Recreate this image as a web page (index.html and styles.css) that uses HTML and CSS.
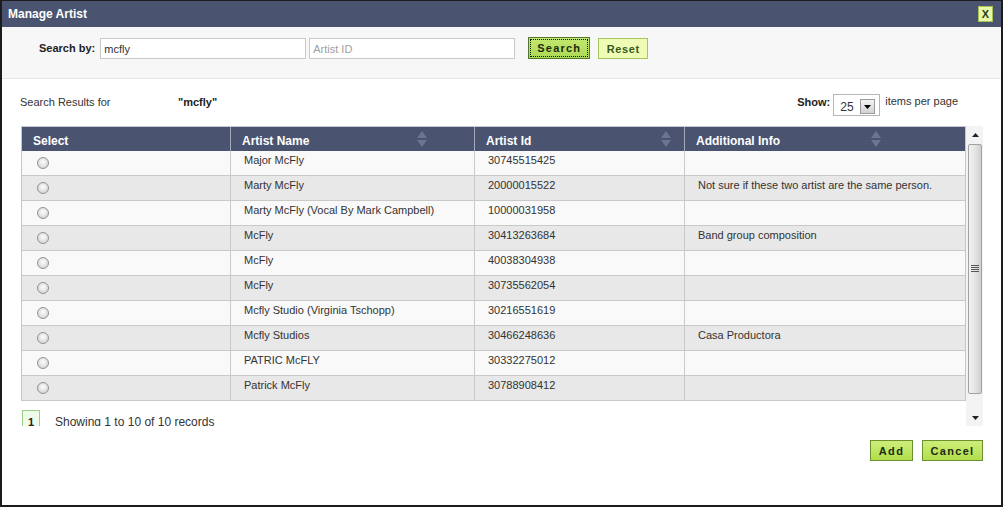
FILE: index.html
```html
<!DOCTYPE html>
<html>
<head>
<meta charset="utf-8">
<title>Manage Artist</title>
<link rel="stylesheet" href="styles.css">
</head>
<body>
<div class="window">
  <header class="titlebar">
    <h1 class="title">Manage Artist</h1>
    <button class="close" type="button">X</button>
  </header>
  <form class="searchbar">
    <label class="search-label">Search by:</label>
    <input class="field" type="text" value="mcfly">
    <input class="field field-id" type="text" placeholder="Artist ID">
    <button class="btn btn-search" type="button">Search</button>
    <button class="btn btn-reset" type="button">Reset</button>
  </form>
  <main class="content">
    <div class="results-head">
      <div class="results-for"><span class="rf-label">Search Results for</span><b>"mcfly"</b></div>
      <div class="show">
        <b class="show-label">Show:</b>
        <div class="select"><span class="select-val">25</span><span class="select-btn"><svg width="7" height="4" viewBox="0 0 7 4"><path d="M0 0H7L3.5 4Z" fill="#000"/></svg></span></div>
        <span class="show-tail">items per page</span>
      </div>
    </div>
    <div class="grid-wrap">
      <div class="viewport">
        <div class="grid">
          <div class="row head">
            <div class="th">Select</div>
            <div class="th">Artist Name<svg class="sort sort-name" width="10" height="18" viewBox="0 0 10 18"><path d="M5 1L10 8H0Z M0 10H10L5 17Z" fill="#6c7690"/></svg></div>
            <div class="th">Artist Id<svg class="sort sort-id" width="10" height="18" viewBox="0 0 10 18"><path d="M5 1L10 8H0Z M0 10H10L5 17Z" fill="#6c7690"/></svg></div>
            <div class="th">Additional Info<svg class="sort sort-info" width="10" height="18" viewBox="0 0 10 18"><path d="M5 1L10 8H0Z M0 10H10L5 17Z" fill="#6c7690"/></svg></div>
          </div>
          <div class="row"><div class="td sel"><input class="radio" type="radio" name="a"></div><div class="td">Major McFly</div><div class="td">30745515425</div><div class="td"></div></div>
          <div class="row alt"><div class="td sel"><input class="radio" type="radio" name="a"></div><div class="td">Marty McFly</div><div class="td">20000015522</div><div class="td">Not sure if these two artist are the same person.</div></div>
          <div class="row"><div class="td sel"><input class="radio" type="radio" name="a"></div><div class="td">Marty McFly (Vocal By Mark Campbell)</div><div class="td">10000031958</div><div class="td"></div></div>
          <div class="row alt"><div class="td sel"><input class="radio" type="radio" name="a"></div><div class="td">McFly</div><div class="td">30413263684</div><div class="td">Band group composition</div></div>
          <div class="row"><div class="td sel"><input class="radio" type="radio" name="a"></div><div class="td">McFly</div><div class="td">40038304938</div><div class="td"></div></div>
          <div class="row alt"><div class="td sel"><input class="radio" type="radio" name="a"></div><div class="td">McFly</div><div class="td">30735562054</div><div class="td"></div></div>
          <div class="row"><div class="td sel"><input class="radio" type="radio" name="a"></div><div class="td">Mcfly Studio (Virginia Tschopp)</div><div class="td">30216551619</div><div class="td"></div></div>
          <div class="row alt"><div class="td sel"><input class="radio" type="radio" name="a"></div><div class="td">Mcfly Studios</div><div class="td">30466248636</div><div class="td">Casa Productora</div></div>
          <div class="row"><div class="td sel"><input class="radio" type="radio" name="a"></div><div class="td">PATRIC McFLY</div><div class="td">30332275012</div><div class="td"></div></div>
          <div class="row alt"><div class="td sel"><input class="radio" type="radio" name="a"></div><div class="td">Patrick McFly</div><div class="td">30788908412</div><div class="td"></div></div>
        </div>
        <div class="pager"><span class="page">1</span><span class="count">Showing 1 to 10 of 10 records</span></div>
      </div>
      <div class="scrollbar">
        <div class="sb-btn"><svg width="7" height="4" viewBox="0 0 7 4"><path d="M3.5 0L7 4H0Z" fill="#222"/></svg></div>
        <div class="sb-track">
          <div class="sb-thumb"><svg width="8" height="8" viewBox="0 0 8 8"><path d="M0 0.5H8M0 2.5H8M0 4.5H8M0 6.5H8" stroke="#555" stroke-width="1"/></svg></div>
        </div>
        <div class="sb-btn"><svg width="7" height="4" viewBox="0 0 7 4"><path d="M0 0H7L3.5 4Z" fill="#222"/></svg></div>
      </div>
    </div>
    <div class="actions">
      <button class="btn btn-go btn-add" type="button">Add</button>
      <button class="btn btn-go btn-cancel" type="button">Cancel</button>
    </div>
  </main>
</div>
</body>
</html>
```
FILE: styles.css
```css
* { box-sizing: border-box; }
html, body { margin: 0; padding: 0; background: #fff; }
body { font-family: "Liberation Sans", Arial, sans-serif; font-size: 11px; color: #333; }

.window {
  width: 1003px;
  height: 507px;
  border: 2px solid #1c1c1c;
  border-top-width: 1px;
  background: #fff;
}

.titlebar {
  height: 26px;
  background: #4a5471;
  display: flex;
  align-items: center;
  justify-content: space-between;
  padding: 0 8px 0 6px;
}
.title {
  margin: 0;
  font-size: 12px;
  font-weight: bold;
  color: #fff;
}
.close {
  width: 15px;
  height: 16px;
  padding: 0;
  border: 1px solid #a5c25a;
  background: #e9f8a8;
  color: #24401c;
  font: bold 11px "Liberation Sans", Arial, sans-serif;
  line-height: 14px;
}

.searchbar {
  margin: 0;
  height: 52px;
  background: #f7f7f7;
  border-bottom: 1px solid #e6e6e6;
  display: flex;
  align-items: flex-start;
  padding: 11px 0 0 37px;
}
.search-label {
  font-weight: bold;
  color: #222;
  line-height: 21px;
  margin-right: 5px;
}
.field {
  width: 206px;
  height: 21px;
  border: 1px solid #c9c9c9;
  background: #fff;
  padding: 0 3px;
  font: 11px "Liberation Sans", Arial, sans-serif;
  color: #333;
  outline: none;
}
.field::placeholder { color: #a0a0a0; }
.field-id { margin-left: 3px; }

.btn {
  height: 21px;
  padding: 0;
  font: bold 11px "Liberation Sans", Arial, sans-serif;
  letter-spacing: 1.2px;
  color: #1d2a12;
  cursor: pointer;
}
.btn-search {
  margin-left: 13px;
  margin-top: -1px;
  width: 62px;
  height: 22px;
  background: linear-gradient(#c4e870, #acd852);
  border: 1px solid #50782a;
  outline: 1px dotted #111;
  outline-offset: -3px;
}
.btn-reset {
  margin-left: 8px;
  width: 50px;
  background: #effcb6;
  border: 1px solid #a5c65c;
  color: #3a5a1a;
  letter-spacing: 0.6px;
}

.content {
  padding: 0 18px 0 18px;
}

.results-head {
  display: flex;
  justify-content: space-between;
  align-items: flex-start;
  margin-top: 15px;
  height: 22px;
}
.results-for { line-height: 16px; color: #333; }
.rf-label { display: inline-block; width: 158px; }
.results-for b { color: #222; }

.show {
  display: flex;
  align-items: flex-start;
  margin-right: 25px;
}
.show-label { line-height: 16px; color: #222; margin-right: 3px; }
.select {
  width: 47px;
  height: 22px;
  border: 1px solid #b4b6bc;
  background: #fff;
  display: flex;
  align-items: center;
  justify-content: space-between;
  padding: 0 4px 0 6px;
}
.select-val { font-size: 12px; padding-top: 3px; color: #333; }
.select-btn {
  width: 15px;
  height: 15px;
  margin-top: 3px;
  border: 1px solid #9a9a9a;
  background: linear-gradient(#f4f4f4, #d2d2d2);
  display: flex;
  align-items: center;
  justify-content: center;
}
.show-tail { line-height: 14px; margin-left: 5px; color: #333; }

.grid-wrap {
  margin-top: 10px;
  margin-left: 1px;
  height: 300px;
  display: flex;
}
.viewport {
  flex: 0 0 945px;
  height: 300px;
  overflow: hidden;
}
.grid {
  width: 945px;
  border-left: 1px solid #c6c6c6;
  border-right: 1px solid #c6c6c6;
  border-top: 1px solid #c6c9d0;
}
.row {
  display: grid;
  grid-template-columns: 208px 244px 210px 281px;
  height: 25px;
  border-bottom: 1px solid #c9c9c9;
  background: #f9f9f9;
}
.row.alt { background: #e8e8e8; }
.row.head {
  height: 24px;
  background: #4a5471;
  border-bottom: none;
}
.th {
  display: flex;
  align-items: center;
  padding: 3px 0 0 11px;
  font-size: 12px;
  font-weight: bold;
  color: #fff;
}
.th + .th { border-left: 1px solid #a3a9b8; }
.sort { margin-left: auto; margin-top: -3px; flex: none; }
.sort-name { margin-right: 47px; }
.sort-id { margin-right: 13px; }
.sort-info { margin-right: 84px; }

.td {
  padding: 2px 0 0 13px;
  line-height: 14px;
  color: #333;
  white-space: nowrap;
  overflow: hidden;
}
.td + .td { border-left: 1px solid #c9c9c9; }
.td.sel {
  display: flex;
  align-items: center;
  padding: 0 0 0 15px;
}
.radio {
  appearance: none;
  -webkit-appearance: none;
  margin: -1px 0 0 0;
  width: 12px;
  height: 12px;
  border-radius: 50%;
  border: 1px solid #929292;
  background: radial-gradient(circle at 50% 40%, #fdfdfd 0, #e6e6e6 45%, #c9c9c9 100%);
}

.pager {
  margin-top: 9px;
  display: flex;
  align-items: center;
}
.page {
  width: 18px;
  height: 24px;
  margin-left: 1px;
  border: 1px solid #9bcf8c;
  background: #effbe9;
  font-weight: bold;
  color: #222;
  text-align: center;
  line-height: 22px;
}
.count { margin-left: 15px; font-size: 12px; color: #333; }

.scrollbar {
  flex: 0 0 17px;
  height: 300px;
  display: flex;
  flex-direction: column;
  background: #f3f3f3;
}
.sb-btn {
  height: 17px;
  display: flex;
  align-items: center;
  justify-content: center;
  padding-left: 2px;
}
.sb-track {
  flex: 1;
  padding: 1px 1px 0 2px;
}
.sb-thumb {
  height: 250px;
  border: 1px solid #a2a2a2;
  border-radius: 2px;
  background: linear-gradient(to right, #f2f2f2, #e3e3e3 55%, #cfcfcf);
  display: flex;
  align-items: center;
  justify-content: center;
}

.actions {
  margin-top: 14px;
  display: flex;
  justify-content: flex-end;
  gap: 9px;
}
.btn-go {
  background: linear-gradient(#cdee7a, #b2de4c);
  border: 1px solid #6b902e;
  letter-spacing: 1.4px;
}
.btn-add { width: 43px; }
.btn-cancel { width: 61px; letter-spacing: 1.3px; }
```
